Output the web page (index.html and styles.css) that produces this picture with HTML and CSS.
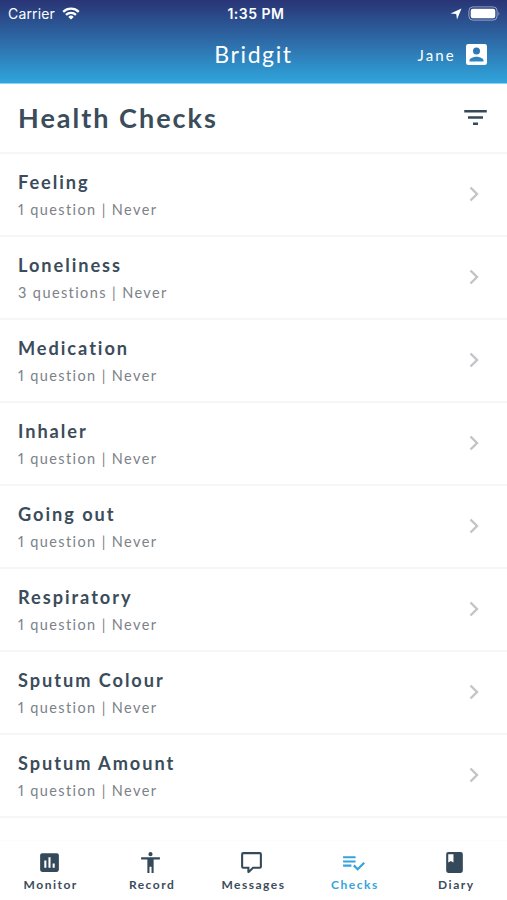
FILE: index.html
```html
<!DOCTYPE html>
<html lang="en">
<head>
  <meta charset="UTF-8">
  <meta name="viewport" content="width=device-width, initial-scale=1.0">
  <title>Bridgit</title>

  <link rel="stylesheet" href="styles.css">
</head>
<body>
  <header class="header">
    <div class="status">
      <div class="carrier">
        <span class="carrier-name">Carrier</span>
        <svg class="wifi" viewBox="0 0 18 13" fill="none" stroke="#fff" stroke-width="2.3">
          <path d="M1.2 4.8a11.2 11.2 0 0 1 15.6 0M4 7.8a7.2 7.2 0 0 1 10 0"/>
          <path d="M9 12.6L6.3 9.9a3.9 3.9 0 0 1 5.4 0z" fill="#fff" stroke="none"/>
        </svg>
      </div>
      <div class="time">1:35 PM</div>
      <div class="indicators">
        <svg class="location" viewBox="0 0 12 12"><path d="M11.5.5L7 11.5 6.2 6 .5 5.4z" fill="#fff"/></svg>
        <svg class="battery" viewBox="0 0 33 15">
          <rect x=".9" y=".9" width="28.2" height="13.2" rx="4" fill="none" stroke="#fff" stroke-opacity=".5"/>
          <rect x="2.7" y="2.7" width="24.6" height="9.6" rx="2.2" fill="#fff"/>
          <path d="M30.5 5.2q1.7 2.3 0 4.6z" fill="#fff" fill-opacity=".5"/>
        </svg>
      </div>
    </div>
    <div class="navbar">
      <div class="brand">Bridgit</div>
      <div class="user">
        <span class="user-name">Jane</span>
        <svg class="user-icon" viewBox="3 3 18 18"><path fill="#fff" d="M3 5v14a2 2 0 0 0 2 2h14a2 2 0 0 0 2-2V5a2 2 0 0 0-2-2H5a2 2 0 0 0-2 2zm12 4a3 3 0 1 1-6 0 3 3 0 0 1 6 0zm-9 8c0-2 4-3.1 6-3.1s6 1.1 6 3.1v1H6z"/></svg>
      </div>
    </div>
  </header>

  <div class="heading">
    <h1 class="heading-title">Health Checks</h1>
    <svg class="filter" viewBox="3 6 18 12"><path fill="#34495a" d="M10 18h4v-2h-4zM3 6v2h18V6zm3 7h12v-2H6z"/></svg>
  </div>

  <ul class="checks">
    <li class="check">
      <div>
        <h2 class="check-name">Feeling</h2>
        <p class="check-info">1 question | Never</p>
      </div>
      <svg class="chevron" viewBox="0 0 10 16"><path d="M1.5 1.5L8 8l-6.5 6.5"/></svg>
    </li>
    <li class="check">
      <div>
        <h2 class="check-name">Loneliness</h2>
        <p class="check-info">3 questions | Never</p>
      </div>
      <svg class="chevron" viewBox="0 0 10 16"><path d="M1.5 1.5L8 8l-6.5 6.5"/></svg>
    </li>
    <li class="check">
      <div>
        <h2 class="check-name">Medication</h2>
        <p class="check-info">1 question | Never</p>
      </div>
      <svg class="chevron" viewBox="0 0 10 16"><path d="M1.5 1.5L8 8l-6.5 6.5"/></svg>
    </li>
    <li class="check">
      <div>
        <h2 class="check-name">Inhaler</h2>
        <p class="check-info">1 question | Never</p>
      </div>
      <svg class="chevron" viewBox="0 0 10 16"><path d="M1.5 1.5L8 8l-6.5 6.5"/></svg>
    </li>
    <li class="check">
      <div>
        <h2 class="check-name">Going out</h2>
        <p class="check-info">1 question | Never</p>
      </div>
      <svg class="chevron" viewBox="0 0 10 16"><path d="M1.5 1.5L8 8l-6.5 6.5"/></svg>
    </li>
    <li class="check">
      <div>
        <h2 class="check-name">Respiratory</h2>
        <p class="check-info">1 question | Never</p>
      </div>
      <svg class="chevron" viewBox="0 0 10 16"><path d="M1.5 1.5L8 8l-6.5 6.5"/></svg>
    </li>
    <li class="check">
      <div>
        <h2 class="check-name">Sputum Colour</h2>
        <p class="check-info">1 question | Never</p>
      </div>
      <svg class="chevron" viewBox="0 0 10 16"><path d="M1.5 1.5L8 8l-6.5 6.5"/></svg>
    </li>
    <li class="check">
      <div>
        <h2 class="check-name">Sputum Amount</h2>
        <p class="check-info">1 question | Never</p>
      </div>
      <svg class="chevron" viewBox="0 0 10 16"><path d="M1.5 1.5L8 8l-6.5 6.5"/></svg>
    </li>
  </ul>

  <nav class="tabs">
    <div class="tab">
      <svg class="tab-icon" viewBox="0 0 24 24"><path d="M19 3H5a2 2 0 0 0-2 2v14a2 2 0 0 0 2 2h14a2 2 0 0 0 2-2V5a2 2 0 0 0-2-2zM9 17H7v-7h2zm4 0h-2V7h2zm4 0h-2v-4h2z"/></svg>
      <span>Monitor</span>
    </div>
    <div class="tab">
      <svg class="tab-icon" viewBox="0 0 24 24"><path d="M12 2a2 2 0 1 1 0 4 2 2 0 0 1 0-4zm9 7h-6v13h-2v-6h-2v6H9V9H3V7h18z"/></svg>
      <span>Record</span>
    </div>
    <div class="tab">
      <svg class="tab-icon" viewBox="0 0 24 24"><path d="M9 22a1 1 0 0 1-1-1v-3H4a2 2 0 0 1-2-2V4a2 2 0 0 1 2-2h16a2 2 0 0 1 2 2v12a2 2 0 0 1-2 2h-6.1l-3.7 3.71c-.2.19-.45.29-.7.29zm1-6v3.08L13.08 16H20V4H4v12z"/></svg>
      <span>Messages</span>
    </div>
    <div class="tab active">
      <svg class="tab-icon" viewBox="0 0 24 24"><path d="M14 10H2v2h12zm0-4H2v2h12zM2 16h8v-2H2zm19.5-4.5L23 13l-7 7-4.5-4.5L13 14l3 3z"/></svg>
      <span>Checks</span>
    </div>
    <div class="tab">
      <svg class="tab-icon" viewBox="0 0 24 24"><path d="M18 2H6a2 2 0 0 0-2 2v16a2 2 0 0 0 2 2h12a2 2 0 0 0 2-2V4a2 2 0 0 0-2-2zM6 4h5v8l-2.5-1.5L6 12z"/></svg>
      <span>Diary</span>
    </div>
  </nav>
</body>
</html>
```

FILE: styles.css
```css
* {
  box-sizing: border-box;
  margin: 0;
  padding: 0;
}
body {
  display: flex;
  flex-direction: column;
  height: 100vh;
  overflow: hidden;
  background-color: #fff;
  color: #3b4c5b;
  font-family: Lato, "Liberation Sans", sans-serif;
}

/* header */
.header {
  flex: none;
  height: 84px;
  background: linear-gradient(#293475, #2d66a3 45%, #30a5dc);
  border-bottom: 1px solid #8fd0ed;
  color: #fff;
}
.status {
  display: grid;
  grid-template-columns: 1fr auto 1fr;
  align-items: center;
  height: 27px;
  padding: 0 6px 0 8px;
  font-family: Inter, "Liberation Sans", sans-serif;
  font-size: 14px;
}
.carrier {
  display: flex;
  align-items: center;
  gap: 7px;
}
.carrier-name {
  letter-spacing: 0.15px;
}
.wifi {
  width: 18px;
  height: 13px;
}
.time {
  padding-left: 3px;
  font-size: 14px;
  font-weight: 600;
  letter-spacing: 0.5px;
}
.indicators {
  display: flex;
  align-items: center;
  justify-content: flex-end;
  gap: 6px;
}
.location {
  width: 12px;
  height: 12px;
}
.battery {
  width: 33px;
  height: 15px;
}
.navbar {
  display: grid;
  grid-template-columns: 1fr auto 1fr;
  align-items: center;
  height: 55px;
  padding: 0 20px;
}
.brand {
  grid-column: 2;
  padding-bottom: 2px;
  font-size: 23px;
  letter-spacing: 1.6px;
}
.user {
  display: flex;
  align-items: center;
  justify-content: flex-end;
  gap: 10px;
  font-size: 15px;
  letter-spacing: 2.2px;
}
.user-icon {
  width: 21px;
  height: 21px;
}

/* page title */
.heading {
  flex: none;
  display: flex;
  align-items: center;
  justify-content: space-between;
  height: 69.5px;
  padding: 0 20px 0 18px;
  border-bottom: 2px solid #f5f6f6;
}
.heading-title {
  font-size: 27px;
  font-weight: 700;
  letter-spacing: 2px;
}
.filter {
  width: 23px;
  height: 15px;
}

/* list */
.checks {
  flex: 1;
  min-height: 0;
  overflow: hidden;
  list-style: none;
}
.check {
  display: flex;
  align-items: center;
  justify-content: space-between;
  height: 83px;
  padding: 0 28px 0 18px;
  border-bottom: 2px solid #f5f6f6;
}
.check-name {
  padding-top: 3px;
  font-size: 18.2px;
  font-weight: 700;
  line-height: 27px;
  letter-spacing: 1.95px;
}
.check-info {
  color: #7c8288;
  font-size: 14.5px;
  font-variant-numeric: proportional-nums;
  line-height: 27px;
  letter-spacing: 1.4px;
}
.chevron {
  width: 10px;
  height: 16px;
  fill: none;
  stroke: #c2c4c7;
  stroke-width: 2.4;
}

/* bottom tabs */
.tabs {
  flex: none;
  display: grid;
  grid-template-columns: repeat(5, 1fr);
  height: 60px;
  padding-top: 9px;
  border-top: 1px solid #fafbfb;
  background-color: #fff;
}
.tab {
  display: flex;
  flex-direction: column;
  align-items: center;
  gap: 2px;
  font-size: 12px;
  font-weight: 700;
  line-height: 15px;
  letter-spacing: 1.5px;
}
.tab-icon {
  width: 25px;
  height: 25px;
  margin-right: 3px;
  fill: #34495a;
}
.active {
  color: #35a3dc;
}
.active .tab-icon {
  fill: #35a3dc;
}
```
